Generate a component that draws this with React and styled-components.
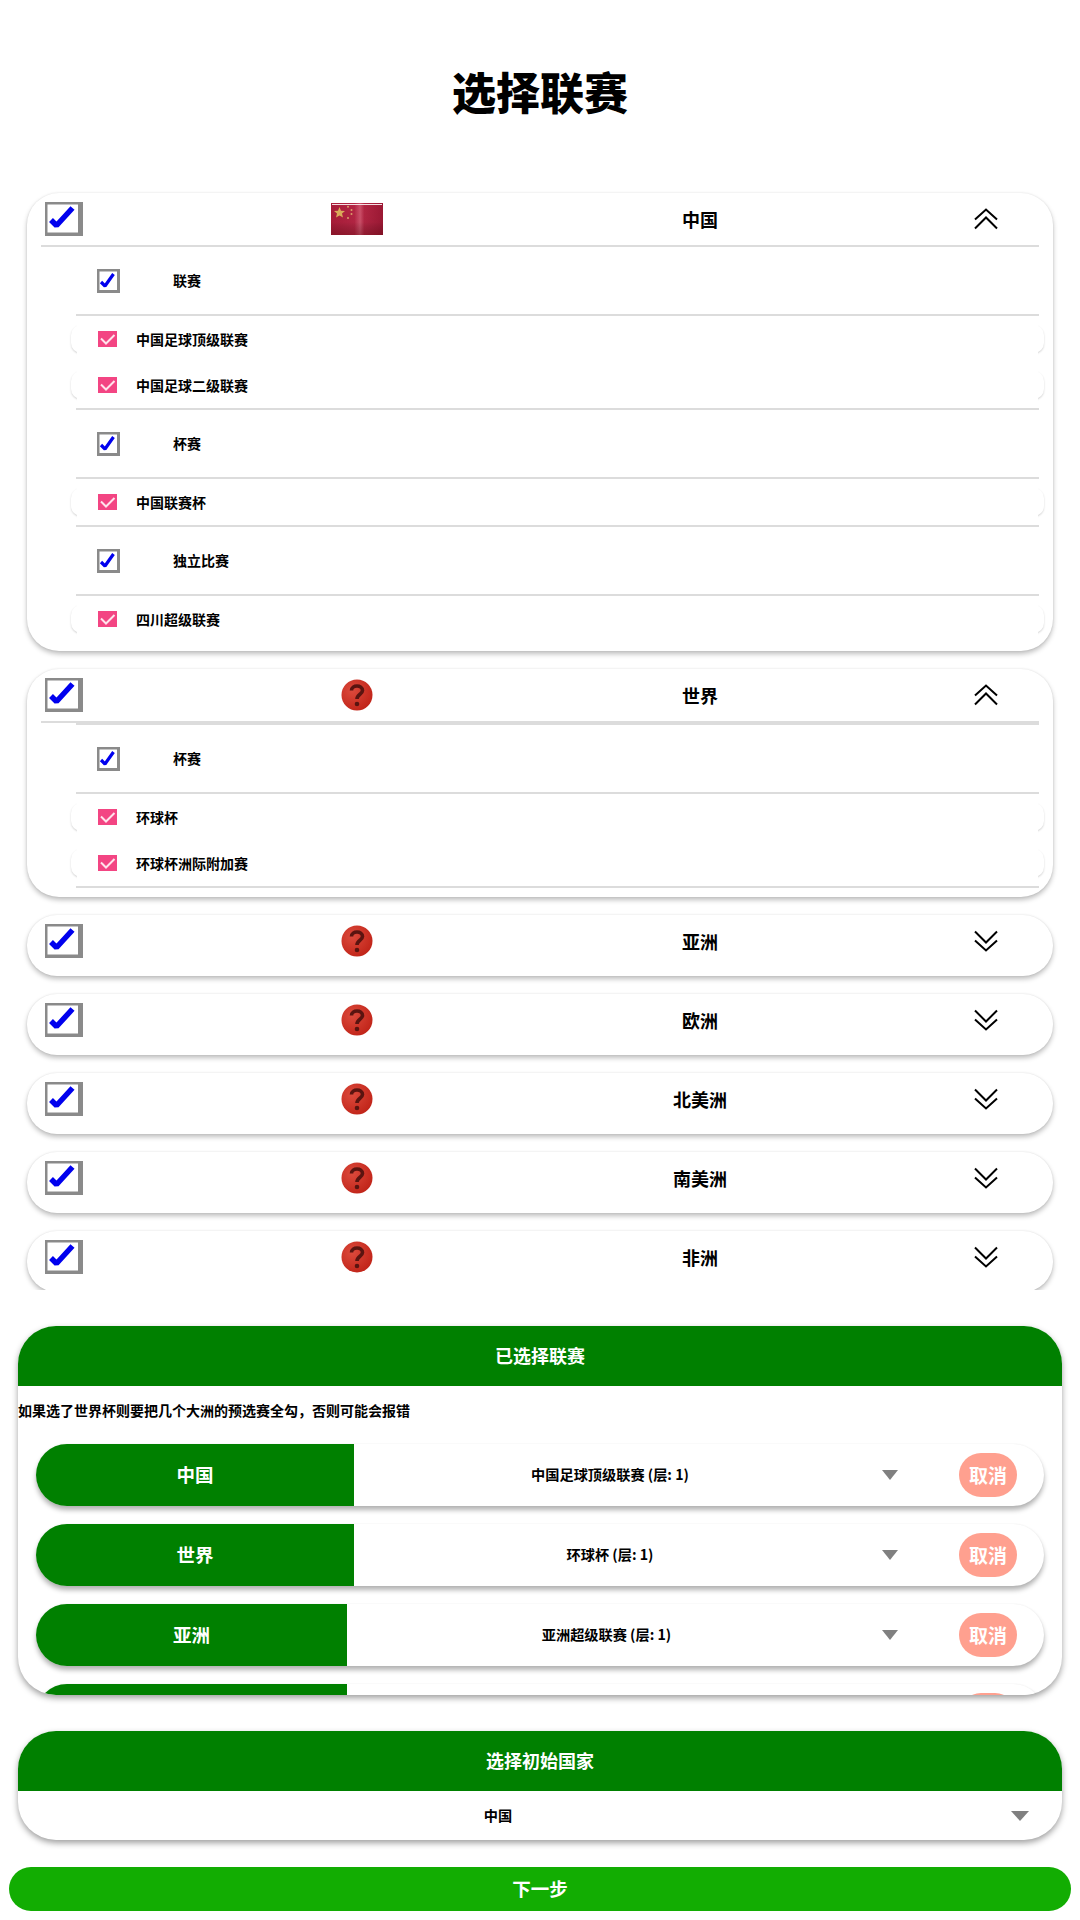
import React from 'react';
import styled, { createGlobalStyle } from 'styled-components';

const GlobalStyle = createGlobalStyle`
    html, body {
        margin: 0;
        padding: 0;
        background: #fff;
    }
    body {
        font-family: "Noto Sans CJK SC", "Noto Sans", sans-serif;
        color: #000;
    }
`;

const Page = styled.div`
    width: 1080px;
    height: 1920px;
    overflow: hidden;
`;

const Title = styled.h1`
    margin: 0;
    padding-top: 61px;
    height: 61px;
    font-size: 44px;
    line-height: 60px;
    font-weight: 900;
    text-align: center;
`;

const LeagueList = styled.div`
    margin-top: 61px;
    height: 1097px;
    padding: 10px 27px 0;
    overflow: hidden;
    display: flex;
    flex-direction: column;
    gap: 18px;
`;

const RegionCard = styled.section`
    flex: none;
    background: #fff;
    border-radius: ${(p) => (p.$open ? '32px' : '30px')};
    padding-bottom: ${(p) => (p.$open ? '9px' : '7px')};
    box-shadow: 0 3px 5px rgba(0, 0, 0, 0.25), 0 0 2px rgba(0, 0, 0, 0.1);
`;

const RegionHeader = styled.div`
    height: 54px;
    box-sizing: border-box;
    display: flex;
    align-items: center;
    padding: 0 17px 2px 18px;
    position: relative;
    ${(p) => p.$open && `
        &::after {
            content: '';
            position: absolute;
            left: 14px;
            right: 14px;
            bottom: 0;
            height: 2px;
            background: #dcdcdc;
        }
    `}
`;

const IconSlot = styled.div`
    width: 548px;
    display: flex;
    justify-content: center;
`;

const RegionName = styled.div`
    width: 138px;
    text-align: center;
    font-size: 18px;
    line-height: 26px;
    font-weight: 700;
`;

const ChevronSlot = styled.div`
    margin-left: auto;
    width: 100px;
    display: flex;
    justify-content: center;
`;

const TypeGroup = styled.div`
    margin: 0 14px 0 49px;
    border-top: ${(p) => (p.$topLine ? '2px solid #dcdcdc' : 'none')};
    border-bottom: ${(p) => (p.$bottomLine ? '2px solid #dcdcdc' : 'none')};
`;

const TypeHeader = styled.div`
    height: 67px;
    display: flex;
    align-items: center;
    gap: 53px;
    padding-left: 21px;
    border-bottom: 2px solid #dcdcdc;
`;

const TypeName = styled.span`
    padding-bottom: 2px;
    font-size: 14px;
    line-height: 20px;
    font-weight: 700;
`;

const LeagueItems = styled.div`
    display: flex;
    flex-direction: column;
    gap: 18px;
    padding: 9px 0;
    margin: 0 -5px;
`;

const LeagueItem = styled.div`
    position: relative;
    height: 28px;
    border-radius: 10px;
    box-shadow: 0 1px 2px rgba(0, 0, 0, 0.18);
    display: flex;
    align-items: center;
    gap: 19px;
    padding-left: 27px;
    font-size: 14px;
    line-height: 20px;
    font-weight: 700;

    &::before {
        content: '';
        position: absolute;
        top: -3px;
        bottom: -3px;
        left: 6px;
        right: 6px;
        background: #fff;
    }

    & > * {
        position: relative;
    }
`;

const Panel = styled.section`
    margin: ${(p) => p.$top} 18px 0;
    height: ${(p) => p.$height};
    background: #fff;
    border-radius: 38px;
    overflow: hidden;
    box-shadow: 0 3px 6px rgba(0, 0, 0, 0.38);
`;

const PanelHeader = styled.header`
    height: 60px;
    background: green;
    color: #fff;
    font-size: 18px;
    line-height: 58px;
    font-weight: 700;
    text-align: center;
`;

const Note = styled.p`
    margin: 0 0 24px;
    padding-top: 14px;
    font-size: 14px;
    line-height: 20px;
    font-weight: 700;
`;

const PickedRows = styled.div`
    display: flex;
    flex-direction: column;
    gap: 18px;
    padding: 0 18px;
`;

const PickedRow = styled.div`
    flex: none;
    height: 62px;
    display: flex;
    align-items: center;
    border-radius: 31px;
    background: #fff;
    box-shadow: 0 4px 5px rgba(0, 0, 0, 0.3), 0 0 2px rgba(0, 0, 0, 0.06);
`;

const RowRegion = styled.div`
    flex: none;
    width: ${(p) => p.$width}px;
    height: 100%;
    border-radius: 31px 0 0 31px;
    background: green;
    color: #fff;
    font-size: 18.5px;
    line-height: 60px;
    font-weight: 700;
    text-align: center;
`;

const SelectText = styled.div`
    flex: none;
    width: ${(p) => p.$width}px;
    padding-bottom: 2px;
    text-align: center;
    font-size: 14.2px;
    line-height: 20px;
    font-weight: 700;
`;

const Arrow = styled.span`
    flex: none;
    width: 0;
    height: 0;
    margin-left: ${(p) => p.$gap}px;
    border-style: solid;
    border-color: #808080 transparent transparent;
    border-width: 10px ${(p) => p.$half}px 0;
`;

const CancelButton = styled.button`
    flex: none;
    width: 58px;
    height: 44px;
    margin: 0 27px 0 61px;
    padding: 0 0 2px;
    border: 0;
    border-radius: 22px;
    background: #ffa08f;
    color: #fff;
    font-family: inherit;
    font-size: 19px;
    font-weight: 700;
`;

const CountrySelect = styled.div`
    height: 49px;
    display: flex;
    align-items: center;
    padding-top: 1px;
    box-sizing: border-box;
`;

const NextButton = styled.button`
    display: block;
    width: 1062px;
    height: 44px;
    margin: 27px 9px 0;
    padding: 0 0 2px;
    border: 0;
    border-radius: 22px;
    background: #12ad02;
    color: #fff;
    font-family: inherit;
    font-size: 18.5px;
    font-weight: 700;
`;

const BoxCheck = ({ small }) => (
    small ? (
        <svg width="23" height="24" viewBox="0 0 23 24" style={{ flex: 'none' }}>
            <rect width="23" height="24" fill="#8a8a8a" />
            <rect x="2.5" y="2.5" width="17.5" height="18.5" fill="#fff" />
            <path d="M4 13 L8 17 L16.5 5" fill="none" stroke="#0000ee" strokeWidth="3.2" strokeLinejoin="bevel" />
        </svg>
    ) : (
        <svg width="38" height="34" viewBox="0 0 38 34" style={{ flex: 'none' }}>
            <rect width="38" height="34" fill="#8a8a8a" />
            <rect x="2.5" y="2.5" width="30.5" height="28" fill="#fff" />
            <path d="M6 18 L11.5 23.5 L27.5 6" fill="none" stroke="#0000ee" strokeWidth="5.5" strokeLinejoin="bevel" />
        </svg>
    )
);

const PinkCheck = () => (
    <svg width="19" height="16" viewBox="0 0 19 16" style={{ flex: 'none' }}>
        <rect width="19" height="16" fill="#f34583" />
        <path d="M3 7.5 L8 12.5 L16.5 4" fill="none" stroke="#ffe4ec" strokeWidth="2" />
    </svg>
);

const ChinaFlag = () => (
    <svg width="52" height="32" viewBox="0 0 52 32">
        <defs>
            <linearGradient id="flagSheen" x1="0" x2="1" y1="0" y2="0">
                <stop offset="0" stopColor="#a81c38" />
                <stop offset="0.45" stopColor="#b32543" />
                <stop offset="0.56" stopColor="#cc5069" />
                <stop offset="0.64" stopColor="#b12542" />
                <stop offset="1" stopColor="#9c1834" />
            </linearGradient>
            <linearGradient id="flagShade" x1="0" x2="0" y1="0" y2="1">
                <stop offset="0" stopColor="#000" stopOpacity="0" />
                <stop offset="0.6" stopColor="#000" stopOpacity="0.02" />
                <stop offset="1" stopColor="#400" stopOpacity="0.3" />
            </linearGradient>
        </defs>
        <rect width="52" height="32" fill="url(#flagSheen)" />
        <rect width="52" height="32" fill="url(#flagShade)" />
        <rect x="1" y="1" width="50" height="1" fill="#f4dfe3" />
        <path d="M8.5 4 L10 7.8 L14 8 L11 10.6 L12 14.6 L8.5 12.4 L5 14.6 L6 10.6 L3 8 L7 7.8 Z" fill="#d9a95a" />
        <circle cx="17" cy="3.8" r="1" fill="#d9a06a" />
        <circle cx="20.5" cy="7" r="1" fill="#d9a06a" />
        <circle cx="20.5" cy="11" r="1" fill="#d9a06a" />
        <circle cx="17" cy="15" r="1" fill="#d9a06a" />
    </svg>
);

const UnknownFlag = ({ id }) => (
    <svg width="32" height="32" viewBox="0 0 32 32">
        <defs>
            <radialGradient id={id} cx="0.35" cy="0.35" r="0.8">
                <stop offset="0" stopColor="#dc4a3c" />
                <stop offset="1" stopColor="#bd1f14" />
            </radialGradient>
        </defs>
        <circle cx="16" cy="16" r="15.5" fill={`url(#${id})`} />
        <path d="M10.5 11.5 C10.5 5.5 21.5 5.5 21.5 11.5 C21.5 15.5 16 15 16 20" fill="none" stroke="#5a1410" strokeWidth="3.6" />
        <circle cx="16" cy="25" r="2.3" fill="#5a1410" />
    </svg>
);

const DoubleChevron = ({ open }) => (
    <svg width="24" height="22" viewBox="0 0 24 22" style={{ transform: open ? 'none' : 'scaleY(-1)' }}>
        <path d="M1 11.5 L12 1.5 L23 11.5 M1 20.5 L12 9.5 L23 20.5" fill="none" stroke="#000" strokeWidth="2" />
    </svg>
);

const regions = [
    {
        name: '中国',
        open: true,
        flag: 'china',
        groups: [
            { name: '联赛', bottomLine: true, leagues: ['中国足球顶级联赛', '中国足球二级联赛'] },
            { name: '杯赛', bottomLine: true, leagues: ['中国联赛杯'] },
            { name: '独立比赛', leagues: ['四川超级联赛'] },
        ],
    },
    {
        name: '世界',
        open: true,
        groups: [
            { name: '杯赛', topLine: true, bottomLine: true, leagues: ['环球杯', '环球杯洲际附加赛'] },
        ],
    },
    { name: '亚洲' },
    { name: '欧洲' },
    { name: '北美洲' },
    { name: '南美洲' },
    { name: '非洲' },
];

// the fourth row is scrolled away, only its top edge shows
const picked = [
    { region: '中国', league: '中国足球顶级联赛 (层: 1)', cancel: '取消', width: 318 },
    { region: '世界', league: '环球杯 (层: 1)', cancel: '取消', width: 318 },
    { region: '亚洲', league: '亚洲超级联赛 (层: 1)', cancel: '取消', width: 311 },
    { region: '', league: '', cancel: '', width: 311 },
];

const App = () => {
    return (
        <Page>
            <GlobalStyle />
            <Title>选择联赛</Title>

            <LeagueList>
                {regions.map((region, index) => (
                    <RegionCard key={region.name} $open={region.open}>
                        <RegionHeader $open={region.open}>
                            <BoxCheck />
                            <IconSlot>
                                {region.flag === 'china' ? <ChinaFlag /> : <UnknownFlag id={`unknown-${index}`} />}
                            </IconSlot>
                            <RegionName>{region.name}</RegionName>
                            <ChevronSlot>
                                <DoubleChevron open={region.open} />
                            </ChevronSlot>
                        </RegionHeader>
                        {region.groups && region.groups.map((group) => (
                            <TypeGroup key={group.name} $topLine={group.topLine} $bottomLine={group.bottomLine}>
                                <TypeHeader>
                                    <BoxCheck small />
                                    <TypeName>{group.name}</TypeName>
                                </TypeHeader>
                                <LeagueItems>
                                    {group.leagues.map((league) => (
                                        <LeagueItem key={league}>
                                            <PinkCheck />
                                            <span>{league}</span>
                                        </LeagueItem>
                                    ))}
                                </LeagueItems>
                            </TypeGroup>
                        ))}
                    </RegionCard>
                ))}
            </LeagueList>

            <Panel $top="36px" $height="369px">
                <PanelHeader>已选择联赛</PanelHeader>
                <Note>如果选了世界杯则要把几个大洲的预选赛全勾，否则可能会报错</Note>
                <PickedRows>
                    {picked.map((row, index) => (
                        <PickedRow key={index}>
                            <RowRegion $width={row.width}>{row.region}</RowRegion>
                            <SelectText $width={512 + 318 - row.width}>{row.league}</SelectText>
                            <Arrow $gap={16} $half={8} />
                            <CancelButton>{row.cancel}</CancelButton>
                        </PickedRow>
                    ))}
                </PickedRows>
            </Panel>

            <Panel $top="36px" $height="109px">
                <PanelHeader>选择初始国家</PanelHeader>
                <CountrySelect>
                    <SelectText $width={960}>中国</SelectText>
                    <Arrow $gap={33} $half={9} />
                </CountrySelect>
            </Panel>

            <NextButton>下一步</NextButton>
        </Page>
    );
};

export default App;
